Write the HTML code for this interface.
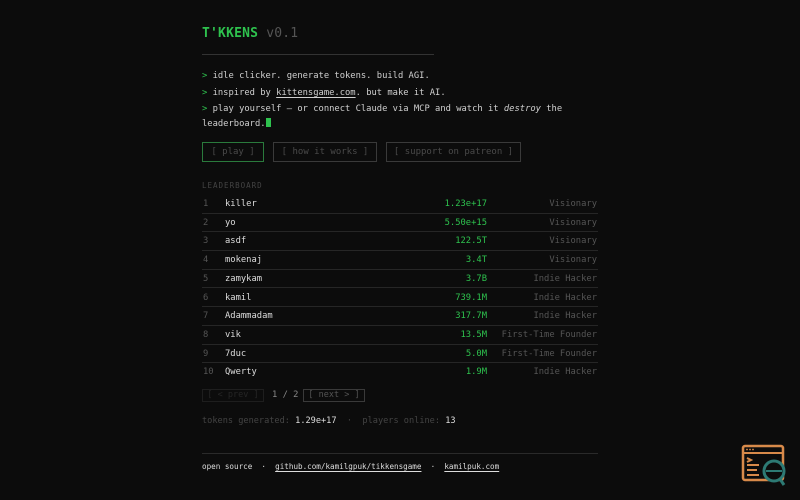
<!DOCTYPE html>
<html><head><meta charset="utf-8"><style>
*{margin:0;padding:0;box-sizing:border-box}
body{width:800px;height:500px;background:#0c0c0c;font-family:"DejaVu Sans Mono","Liberation Mono",monospace;font-size:8.8px;color:#d0d0d0;position:relative;overflow:hidden}
.a{position:absolute;white-space:nowrap}
.g{color:#2ec24e}
.d{color:#555}
.btn{position:absolute;height:20px;border:1px solid #3a3a3a;color:#4a4a4a;line-height:18px;text-align:center;font-size:9px}
.row{position:absolute;left:202px;width:396px;height:18.7px;border-bottom:1px solid #262626;line-height:19px}
.row span{position:absolute}
.n{left:1px;color:#555}.nm{left:23px;color:#ddd}.sc{right:111px;color:#2ec24e}.tl{right:1px;color:#555}
u{text-underline-offset:2px}
</style></head><body>
<div class="a g" style="left:202px;top:26px;font-size:13px;font-weight:bold;letter-spacing:0.2px">T'KKENS <span style="color:#555;font-weight:normal">v0.1</span></div>
<div class="a" style="left:202px;top:54px;width:232px;height:1px;background:#333"></div>
<div class="a" style="left:202px;top:70px;line-height:12px;top:70px"><span class="g">&gt;</span> idle clicker. generate tokens. build AGI.</div>
<div class="a" style="left:202px;top:86.5px;line-height:12px"><span class="g">&gt;</span> inspired by <u>kittensgame.com</u>. but make it AI.</div>
<div class="a" style="left:202px;top:102.5px;line-height:12px"><span class="g">&gt;</span> play yourself — or connect Claude via MCP and watch it <i>destroy</i> the</div>
<div class="a" style="left:202px;top:118px;line-height:12px">leaderboard.<span style="display:inline-block;width:5px;height:9px;background:#2ec24e;vertical-align:-1px"></span></div>
<div class="btn g" style="left:202px;top:142px;width:62px;border-color:#2a7a3c">[ play ]</div>
<div class="btn" style="left:273px;top:142px;width:104px">[ how it works ]</div>
<div class="btn" style="left:386px;top:142px;width:135px">[ support on patreon ]</div>
<div class="a" style="left:202px;top:181px;font-size:7.5px;letter-spacing:1px;color:#444">LEADERBOARD</div>
<div class="row" style="top:195px"><span class="n">1</span><span class="nm">killer</span><span class="sc">1.23e+17</span><span class="tl">Visionary</span></div>
<div class="row" style="top:213.7px"><span class="n">2</span><span class="nm">yo</span><span class="sc">5.50e+15</span><span class="tl">Visionary</span></div>
<div class="row" style="top:232.4px"><span class="n">3</span><span class="nm">asdf</span><span class="sc">122.5T</span><span class="tl">Visionary</span></div>
<div class="row" style="top:251.1px"><span class="n">4</span><span class="nm">mokenaj</span><span class="sc">3.4T</span><span class="tl">Visionary</span></div>
<div class="row" style="top:269.8px"><span class="n">5</span><span class="nm">zamykam</span><span class="sc">3.7B</span><span class="tl">Indie Hacker</span></div>
<div class="row" style="top:288.5px"><span class="n">6</span><span class="nm">kamil</span><span class="sc">739.1M</span><span class="tl">Indie Hacker</span></div>
<div class="row" style="top:307.2px"><span class="n">7</span><span class="nm">Adammadam</span><span class="sc">317.7M</span><span class="tl">Indie Hacker</span></div>
<div class="row" style="top:325.9px"><span class="n">8</span><span class="nm">vik</span><span class="sc">13.5M</span><span class="tl">First-Time Founder</span></div>
<div class="row" style="top:344.6px"><span class="n">9</span><span class="nm">7duc</span><span class="sc">5.0M</span><span class="tl">First-Time Founder</span></div>
<div class="row" style="top:363.3px;border:none"><span class="n">10</span><span class="nm">Qwerty</span><span class="sc">1.9M</span><span class="tl">Indie Hacker</span></div>
<div class="btn" style="left:202px;top:389px;width:62px;height:13px;line-height:11px;border-color:#1e1e1e;color:#262626;font-size:8.5px">[ &lt; prev ]</div>
<div class="a" style="left:272px;top:390px;color:#888">1 / 2</div>
<div class="btn" style="left:303px;top:389px;width:62px;height:13px;line-height:11px;color:#555;font-size:8.5px">[ next &gt; ]</div>
<div class="a" style="left:202px;top:416px;color:#444;font-size:8.6px">tokens generated: <span style="color:#ddd">1.29e+17</span> &nbsp;·&nbsp; players online: <span style="color:#ddd">13</span></div>
<div class="a" style="left:202px;top:453px;width:396px;height:1px;background:#2a2a2a"></div>
<div class="a" style="left:202px;top:462px;color:#ddd;font-size:7.6px">open source &nbsp;·&nbsp; <u>github.com/kamilgpuk/tikkensgame</u> &nbsp;·&nbsp; <u>kamilpuk.com</u></div>
<svg class="a" style="left:740px;top:444px" width="50" height="46" viewBox="0 0 50 46">
<rect x="3" y="2" width="40" height="34" rx="2" fill="none" stroke="#d88a4a" stroke-width="2.5"/>
<line x1="3" y1="9" x2="43" y2="9" stroke="#d88a4a" stroke-width="2"/>
<circle cx="7" cy="5.5" r=".9" fill="#d88a4a"/><circle cx="10" cy="5.5" r=".9" fill="#d88a4a"/><circle cx="13" cy="5.5" r=".9" fill="#d88a4a"/>
<path d="M7 14l4 2-4 2M7 21h12M7 26h10M7 31h12" stroke="#d88a4a" stroke-width="2" fill="none"/>
<circle cx="34" cy="27" r="10" fill="#0c0c0c" stroke="#2d7a74" stroke-width="3"/>
<line x1="26" y1="27" x2="42" y2="27" stroke="#2d7a74" stroke-width="2"/>
<line x1="40" y1="35" x2="44" y2="41" stroke="#2d7a74" stroke-width="3"/>
</svg>
</body></html>
